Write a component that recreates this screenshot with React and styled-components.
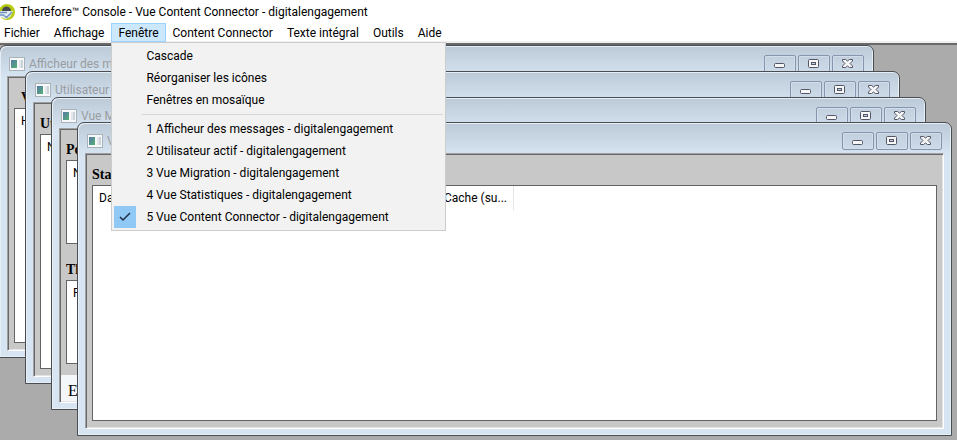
import React, { useState } from "react";
import styled, { createGlobalStyle } from "styled-components";

const MENUS = [
  "Fichier",
  "Affichage",
  "Fenêtre",
  "Content Connector",
  "Texte intégral",
  "Outils",
  "Aide",
];

const COMMANDS = ["Cascade", "Réorganiser les icônes", "Fenêtres en mosaïque"];

const WINDOWS = [
  "1 Afficheur des messages - digitalengagement",
  "2 Utilisateur actif - digitalengagement",
  "3 Vue Migration - digitalengagement",
  "4 Vue Statistiques - digitalengagement",
  "5 Vue Content Connector - digitalengagement",
];

function AppLogo() {
  return (
    <svg width="16" height="18" viewBox="0 0 16 18" aria-hidden="true">
      <circle cx="7" cy="9" r="8" fill="#b9cc14" />
      <path d="M2 8a4.500 4.500 0 0 1 9 0z" fill="#454a50" />
      <path d="M0 8h13l-3 6-4 2-6-2z" fill="#e6ecf4" />
      <path d="M0 9.500h7M0 12h4M4 12.500l2.500 2L12 9" stroke="#6f93c4" strokeWidth="1.500" fill="none" />
    </svg>
  );
}

function ChildIcon() {
  return (
    <svg width="16" height="14" viewBox="0 0 16 14" aria-hidden="true">
      <defs>
        <linearGradient id="pane" x1="0" y1="0" x2="1" y2="1">
          <stop offset="0" stopColor="#5577a8" />
          <stop offset="1" stopColor="#55b173" />
        </linearGradient>
      </defs>
      <rect x="0.500" y="0.500" width="15" height="13" fill="#f7f8f9" stroke="#a9b1b9" />
      <rect x="2" y="3" width="6" height="8" fill="url(#pane)" />
      <rect x="10" y="3" width="2" height="8" fill="#e3e6ea" />
      <rect x="12" y="3" width="2" height="8" fill="#cdd2d8" />
    </svg>
  );
}

function MinimizeIcon() {
  return (
    <svg width="12" height="12" viewBox="0 0 12 12" aria-hidden="true">
      <rect x="0.500" y="5.500" width="10" height="4" rx="1" fill="#f6f6f6" stroke="#535666" />
    </svg>
  );
}

function MaximizeIcon() {
  return (
    <svg width="12" height="12" viewBox="0 0 12 12" aria-hidden="true">
      <rect x="0.500" y="1.500" width="10" height="8" rx="1" fill="#f6f6f6" stroke="#535666" />
      <rect x="3.500" y="4.500" width="4" height="2" fill="#c3cfde" stroke="#535666" />
    </svg>
  );
}

function CloseIcon() {
  return (
    <svg width="12" height="12" viewBox="0 0 12 12" aria-hidden="true">
      <path
        d="M0.500 1.500h3l2 1.500 2-1.500h3v1.500l-2.500 2.500 2.500 2.500v1.500h-3l-2-1.500-2 1.500h-3v-1.500l2.500-2.500-2.500-2.500z"
        fill="#f6f6f6"
        stroke="#535666"
      />
    </svg>
  );
}

function ChildWindow({ title, left, top, height, children }) {
  return (
    <Frame $left={left} $top={top} $height={height}>
      <Caption>
        <ChildIcon />
        <CaptionText>{title}</CaptionText>
        <CaptionButton aria-label="Réduire">
          <MinimizeIcon />
        </CaptionButton>
        <CaptionButton aria-label="Agrandir">
          <MaximizeIcon />
        </CaptionButton>
        <CaptionButton aria-label="Fermer">
          <CloseIcon />
        </CaptionButton>
      </Caption>
      <Client>{children}</Client>
    </Frame>
  );
}

function Panel({ heading, indent, columns }) {
  return (
    <Section>
      <Heading $indent={indent}>{heading}</Heading>
      <List>
        <thead>
          <tr>
            {columns.map((column) => (
              <Column key={column.label} $width={column.width}>
                {column.label}
              </Column>
            ))}
          </tr>
        </thead>
      </List>
    </Section>
  );
}

function App() {
  const [active, setActive] = useState(4);

  return (
    <Shell>
      <GlobalStyle />
      <TitleBar>
        <AppLogo />
        Therefore™ Console - Vue Content Connector - digitalengagement
      </TitleBar>
      <MenuBar>
        {MENUS.map((label) => (
          <MenuSlot key={label}>
            <MenuButton $open={label === "Fenêtre"}>{label}</MenuButton>
            {label === "Fenêtre" ? (
              <Menu>
                {COMMANDS.map((item) => (
                  <MenuItem key={item}>
                    <CheckCell />
                    {item}
                  </MenuItem>
                ))}
                <Separator />
                {WINDOWS.map((item, i) => (
                  <MenuItem key={item} onClick={() => setActive(i)}>
                    <CheckCell $checked={i === active}>
                      {i === active ? (
                        <svg width="12" height="10" viewBox="0 0 12 10">
                          <path
                            d="M1 5l3 3 7-7"
                            fill="none"
                            stroke="#1f2f45"
                            strokeWidth="1.500"
                          />
                        </svg>
                      ) : null}
                    </CheckCell>
                    {item}
                  </MenuItem>
                ))}
              </Menu>
            ) : null}
          </MenuSlot>
        ))}
      </MenuBar>
      <Desktop>
        <ChildWindow title="Afficheur des m" left={-1} top={0} height={313}>
          <Panel heading="V" indent columns={[{ label: "H" }]} />
        </ChildWindow>
        <ChildWindow title="Utilisateur" left={25} top={26} height={313}>
          <Panel heading="Ut" columns={[{ label: "N" }]} />
        </ChildWindow>
        <ChildWindow title="Vue M" left={51} top={52} height={313}>
          <Panel heading="Po" columns={[{ label: "N" }]} />
          <Panel heading="Th" columns={[{ label: "P" }]} />
          <Footer>E</Footer>
        </ChildWindow>
        <ChildWindow title="V" left={77} top={77} height={314}>
          <Panel
            heading="Sta"
            columns={[
              { label: "Da", width: 345 },
              { label: "Cache (su...", width: 75 },
            ]}
          />
        </ChildWindow>
      </Desktop>
    </Shell>
  );
}

export default App;

const GlobalStyle = createGlobalStyle`
  * {
    box-sizing: border-box;
  }
  body {
    margin: 0;
    font-family: Roboto, sans-serif;
    font-size: 12px;
    color: #000;
  }
  button {
    font: inherit;
    color: inherit;
  }
`;

const Shell = styled.div`
  display: flex;
  flex-direction: column;
  height: 100vh;
  background: #fff;
  overflow: hidden;
`;

const TitleBar = styled.header`
  display: flex;
  align-items: center;
  gap: 4px;
  height: 23px;
  white-space: nowrap;
`;

const MenuBar = styled.nav`
  display: flex;
  height: 20px;
  margin-left: -3px;
  border-bottom: 2px solid #f0f0f0;
`;

const MenuSlot = styled.div`
  position: relative;
`;

const MenuButton = styled.button`
  height: 19px;
  padding: 0 6px;
  border: 1px solid ${(props) => (props.$open ? "#99d1ff" : "transparent")};
  background: ${(props) => (props.$open ? "#cce8ff" : "none")};
  line-height: 16px;
  white-space: nowrap;
`;

const Menu = styled.div`
  position: absolute;
  top: 19px;
  left: 0;
  z-index: 2;
  width: 335px;
  padding: 2px;
  border: 1px solid #ccc;
  background: #f2f2f2;
`;

const MenuItem = styled.button`
  display: flex;
  align-items: center;
  gap: 10px;
  width: 100%;
  height: 22px;
  padding: 0;
  border: 0;
  background: none;
  text-align: left;
  white-space: nowrap;
  &:hover {
    background: #91c9f7;
  }
`;

const CheckCell = styled.span`
  display: flex;
  align-items: center;
  justify-content: center;
  width: 22px;
  height: 22px;
  background: ${(props) => (props.$checked ? "#90c8f6" : "none")};
`;

const Separator = styled.hr`
  height: 1px;
  margin: 3px 0 3px 28px;
  border: 0;
  background: #d7d7d7;
`;

const Desktop = styled.main`
  position: relative;
  flex: 1;
  border-top: 2px solid #696969;
  background: #ababab;
  overflow: hidden;
`;

const Frame = styled.section`
  position: absolute;
  left: ${(props) => props.$left}px;
  top: ${(props) => props.$top}px;
  display: flex;
  flex-direction: column;
  width: 875px;
  height: ${(props) => props.$height}px;
  padding: 0 7px 6px;
  border: 1px solid #4a4d52;
  border-radius: 7px 7px 0 0;
  background: linear-gradient(#bccad8, #d7e4f1 32px);
  box-shadow: inset 1px 1px 0 #e6eef6, inset -1px -1px 0 #e6eef6;
`;

const Caption = styled.div`
  display: flex;
  align-items: center;
  gap: 2px;
  height: 30px;
  padding: 6px 2px 0;
`;

const CaptionText = styled.span`
  flex: 1;
  padding-left: 2px;
  color: #999da3;
  white-space: nowrap;
`;

const CaptionButton = styled.button`
  display: flex;
  align-items: center;
  justify-content: center;
  width: 32px;
  height: 18px;
  padding: 0;
  border: 1px solid #8495ae;
  border-radius: 2px;
  background: linear-gradient(#c2cfde, #cddae8);
  box-shadow: inset 0 0 0 1px #d3deea;
`;

const Client = styled.div`
  display: flex;
  flex: 1;
  flex-direction: column;
  padding: 1px;
  border: 1px solid #fff;
  border-top-color: #a0a0a0;
  border-left-color: #a0a0a0;
  background: #c8c8c8;
  box-shadow: inset 1px 1px 0 #696969, inset -1px -1px 0 #e3e3e3;
`;

const Section = styled.div`
  display: flex;
  flex: 1;
  flex-direction: column;
  padding: 8px 5px 6px;
`;

const Heading = styled.h2`
  margin: 0;
  padding-left: ${(props) => (props.$indent ? 7 : 0)}px;
  height: 22px;
  font-family: "Liberation Serif", serif;
  font-size: 14px;
  line-height: 24px;
`;

const List = styled.table`
  display: block;
  flex: 1;
  border: 1px solid #646464;
  border-spacing: 0;
  background: #fff;
`;

const Column = styled.th`
  height: 24px;
  min-width: ${(props) => props.$width || 75}px;
  padding: 0 6px;
  font-weight: 400;
  text-align: left;
  white-space: nowrap;
  &:last-child {
    border-right: 1px solid #e5e5e5;
  }
`;

const Footer = styled.div`
  height: 26px;
  margin-top: 5px;
  padding-left: 7px;
  background: #f4f7fa;
  font-family: "Liberation Serif", serif;
  font-size: 16px;
  line-height: 32px;
`;
